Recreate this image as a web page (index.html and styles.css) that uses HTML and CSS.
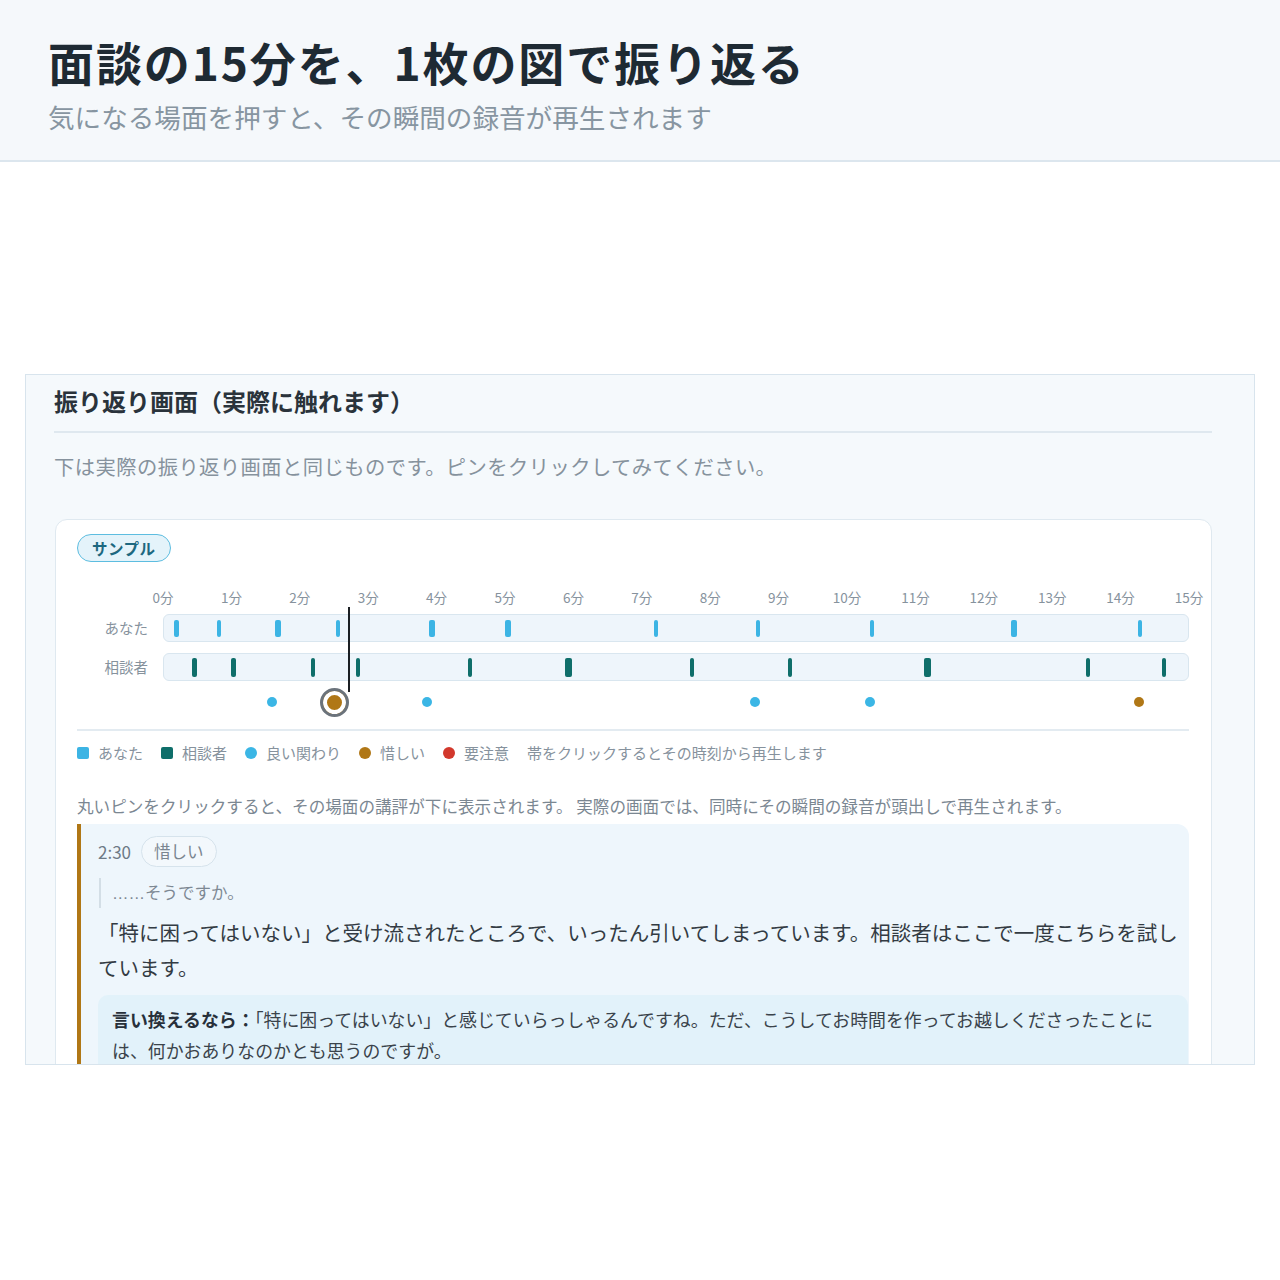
FILE: index.html
```html
<!DOCTYPE html>
<html lang="ja">

<head>
    <meta charset="utf-8" />
    <title>面談の振り返り</title>
    <meta name="viewport" content="width=device-width, initial-scale=1.0" />
    <link rel="stylesheet" href="styles.css">
</head>

<body>
    <header class="hero">
        <h1 class="hero-title">面談の15分を、1枚の図で振り返る</h1>
        <p class="hero-sub">気になる場面を押すと、その瞬間の録音が再生されます</p>
    </header>

    <section class="demo">
        <h2 class="demo-title">振り返り画面（実際に触れます）</h2>
        <p class="demo-desc">下は実際の振り返り画面と同じものです。ピンをクリックしてみてください。</p>

        <div class="review">
            <span class="badge">サンプル</span>

            <div class="timeline">
                <div class="axis"></div>
                <div class="row-label row-you">あなた</div>
                <div class="track row-you" data-who="you"></div>
                <div class="row-label row-client">相談者</div>
                <div class="track row-client" data-who="client"></div>
                <div class="pins"></div>
                <div class="cursor-layer">
                    <div class="playhead"></div>
                </div>
            </div>

            <div class="legend">
                <span class="legend-item"><i class="mark sq you"></i>あなた</span>
                <span class="legend-item"><i class="mark sq client"></i>相談者</span>
                <span class="legend-item"><i class="mark dot good"></i>良い関わり</span>
                <span class="legend-item"><i class="mark dot regret"></i>惜しい</span>
                <span class="legend-item"><i class="mark dot caution"></i>要注意</span>
                <span class="legend-item">帯をクリックするとその時刻から再生します</span>
            </div>

            <p class="note">丸いピンをクリックすると、その場面の講評が下に表示されます。 実際の画面では、同時にその瞬間の録音が頭出しで再生されます。</p>

            <div class="comment">
                <div class="comment-head">
                    <span class="stamp">2:30</span>
                    <span class="tag">惜しい</span>
                </div>
                <blockquote class="quote">……そうですか。</blockquote>
                <p class="comment-body">「特に困ってはいない」と受け流されたところで、いったん引いてしまっています。相談者はここで一度こちらを試しています。</p>
                <div class="rephrase"><b>言い換えるなら：</b><span>「特に困ってはいない」と感じていらっしゃるんですね。ただ、こうしてお時間を作ってお越しくださったことには、何かおありなのかとも思うのですが。</span></div>
            </div>
        </div>
    </section>

    <script>
        // 面談の長さ（秒）
        const TOTAL = 900;

        // 発話区間 [開始秒, 長さ秒]
        const speech = {
            you: [[9, 4.4], [46.5, 3.5], [97.4, 5.3], [151, 3.5], [232.5, 5.3], [300, 5.3],
                  [430.7, 3.5], [520.2, 3.5], [620.2, 3.5], [744.7, 5.3], [856.1, 3.5]],
            client: [[25, 4.4], [59.2, 4.4], [129, 3.5], [168.4, 3.5], [267.5, 3.5], [352.2, 6.1],
                     [462.3, 3.5], [548.2, 3.5], [668, 6.1], [810.5, 3.5], [877.2, 3.5]],
        };

        // 講評ピン
        const pins = [
            { t: 96, kind: 'good' },
            { t: 150, kind: 'regret', active: true },
            { t: 232, kind: 'good' },
            { t: 519, kind: 'good' },
            { t: 620, kind: 'good' },
            { t: 856, kind: 'regret' },
        ];

        const pct = sec => (sec / TOTAL * 100) + '%';

        const axisEle = document.querySelector('.axis');
        for (let m = 0; m <= 15; m++) {
            const label = document.createElement('span');
            label.className = 'tick';
            label.textContent = m + '分';
            label.style.left = pct(m * 60);
            axisEle.appendChild(label);
        }

        for (const track of document.querySelectorAll('.track')) {
            const who = track.dataset.who;
            for (const [start, len] of speech[who]) {
                const seg = document.createElement('span');
                seg.className = 'seg ' + who;
                seg.style.left = pct(start);
                seg.style.width = pct(len);
                track.appendChild(seg);
            }
        }

        const pinsEle = document.querySelector('.pins');
        for (const pin of pins) {
            const ele = document.createElement('span');
            ele.className = 'pin ' + pin.kind + (pin.active ? ' active' : '');
            ele.style.left = pct(pin.t);
            pinsEle.appendChild(ele);
        }

        document.querySelector('.playhead').style.left = pct(162);
    </script>
</body>

</html>
```

FILE: styles.css
```css
:root {
    --ink: #1e2a33;
    --text: #37424c;
    --muted: #86929d;
    --line: #dfe8ef;
    --pale: #f5f8fb;
    --you: #3cb4e4;
    --client: #0f6e6a;
    --good: #3bb6e5;
    --regret: #b07716;
    --caution: #d2382c;
}

* {
    margin: 0;
    padding: 0;
    box-sizing: border-box;
}

body {
    font-family: "Noto Sans CJK JP", "Noto Sans", sans-serif;
    color: var(--text);
    background: #fff;
}

/* ヘッダー */
.hero {
    height: 162px;
    padding: 33px 48px 0;
    background: var(--pale);
    border-bottom: 2px solid #dce6ee;
}

.hero-title {
    font-size: 46px;
    line-height: 56px;
    font-weight: 700;
    color: var(--ink);
    letter-spacing: 1.9px;
}

.hero-sub {
    margin-top: 10px;
    font-size: 26.6px;
    line-height: 36px;
    color: #8795a1;
}

/* 体験エリア */
.demo {
    margin: 212px 25px 0;
    height: 691px;
    overflow: hidden;
    padding: 10px 42px 0 28px;
    background: #f5f9fc;
    border: 1px solid #d8e4ed;
}

.demo-title {
    font-size: 24px;
    line-height: 32px;
    font-weight: 700;
    color: #2a333b;
    padding-bottom: 14px;
    border-bottom: 2px solid var(--line);
}

.demo-desc {
    margin-top: 18px;
    font-size: 20.3px;
    line-height: 30px;
    letter-spacing: 0.45px;
    color: var(--muted);
}

.review {
    margin: 38px 0 0 1px;
    padding: 14px 22px 0 21px;
    background: #fff;
    border: 1px solid #dfe9f0;
    border-radius: 12px;
}

.badge {
    display: inline-block;
    padding: 1px 14px;
    font-size: 15.5px;
    line-height: 24px;
    font-weight: 700;
    letter-spacing: 0.5px;
    color: #1d6880;
    background: #e4f3fa;
    border: 1.5px solid #5dbde0;
    border-radius: 999px;
}

/* タイムライン */
.timeline {
    margin-top: 25px;
    display: grid;
    grid-template-columns: 71px 1fr;
    grid-template-rows: 20px 35px 39px 36px;
    column-gap: 15px;
}

.axis {
    grid-column: 2;
    grid-row: 1;
    position: relative;
}

.tick {
    position: absolute;
    top: 0;
    transform: translateX(-50%);
    font-size: 13.5px;
    line-height: 20px;
    color: var(--muted);
    white-space: nowrap;
}

.row-label {
    grid-column: 1;
    align-self: end;
    text-align: right;
    font-size: 14.5px;
    line-height: 28px;
    color: var(--muted);
}

.row-you {
    grid-row: 2;
}

.row-client {
    grid-row: 3;
}

.track {
    grid-column: 2;
    align-self: end;
    position: relative;
    height: 28px;
    background: #eef5fb;
    border: 1px solid #d9e6ef;
    border-radius: 6px;
}

.seg {
    position: absolute;
    min-width: 4px;
    border-radius: 2px;
}

.seg.you {
    top: 5px;
    height: 17px;
    background: var(--you);
}

.seg.client {
    top: 4px;
    height: 19px;
    background: var(--client);
}

.pins {
    grid-column: 2;
    grid-row: 4;
    position: relative;
    margin-top: 6px;
    height: 30px;
}

.pin {
    position: absolute;
    top: 10px;
    width: 10px;
    height: 10px;
    margin-left: -5px;
    border-radius: 50%;
}

.pin.good {
    background: var(--good);
}

.pin.regret {
    background: var(--regret);
}

.pin.caution {
    background: var(--caution);
}

.pin.active {
    top: 1px;
    width: 29px;
    height: 29px;
    margin-left: -14.5px;
    border: 3px solid #6b737b;
    box-shadow: inset 0 0 0 4px #fff;
}

.cursor-layer {
    grid-column: 2;
    grid-row: 1 / 5;
    position: relative;
    pointer-events: none;
}

.playhead {
    position: absolute;
    top: 20px;
    width: 2px;
    height: 85px;
    background: #1b1f23;
}

/* 凡例 */
.legend {
    margin-top: 12px;
    padding-top: 12px;
    border-top: 2px solid #e3ebf1;
    display: flex;
    gap: 18px;
    font-size: 15px;
    line-height: 20px;
    color: var(--muted);
}

.legend-item {
    display: flex;
    align-items: center;
    gap: 9px;
}

.mark {
    display: inline-block;
    width: 12px;
    height: 12px;
}

.mark.sq {
    border-radius: 2px;
}

.mark.dot {
    border-radius: 50%;
}

.mark.you {
    background: var(--you);
}

.mark.client {
    background: var(--client);
}

.mark.good {
    background: var(--good);
}

.mark.regret {
    background: var(--regret);
}

.mark.caution {
    background: var(--caution);
}

.note {
    margin-top: 31px;
    font-size: 16.6px;
    line-height: 24px;
    color: #7b8792;
}

/* 講評 */
.comment {
    margin-top: 6px;
    padding: 12px 1px 20px 17px;
    background: #eef6fc;
    border-left: 4px solid var(--regret);
    border-radius: 0 12px 12px 0;
}

.comment-head {
    display: flex;
    align-items: center;
    gap: 10px;
}

.stamp {
    font-size: 17px;
    color: #6d7986;
}

.tag {
    padding: 0 12px;
    font-size: 16.5px;
    line-height: 29px;
    color: #7a8590;
    background: #f3f8fc;
    border: 1px solid #d6e3ec;
    border-radius: 999px;
}

.quote {
    margin-top: 11px;
    margin-left: 1px;
    padding-left: 11px;
    border-left: 2px solid #d3dee6;
    font-family: "Liberation Sans", "Noto Sans CJK JP", sans-serif;
    font-size: 16.5px;
    line-height: 30px;
    color: #7d8893;
}

.comment-body {
    margin-top: 7px;
    font-size: 20.5px;
    line-height: 35px;
    color: #333b43;
}

.rephrase {
    margin-top: 10px;
    padding: 9px 24px 10px 14px;
    background: #e2f2fa;
    border-radius: 10px;
    font-size: 17.9px;
    line-height: 31px;
    color: #3a434b;
}

.rephrase b {
    font-weight: 700;
    color: #27303a;
}
```
